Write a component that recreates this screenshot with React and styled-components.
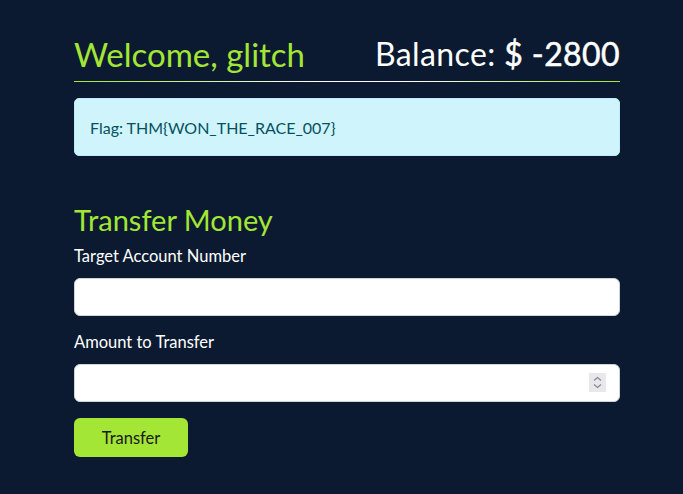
import React from "react"
import styled, { createGlobalStyle } from "styled-components"

const GlobalStyle = createGlobalStyle`
  html, body {
    margin: 0;
    padding: 0;
    background: #0b1a30;
  }
  body {
    font-family: Lato, "Open Sans", sans-serif;
    color: #ffffff;
  }
  * {
    box-sizing: border-box;
  }
`

const Page = styled.div`
  min-height: 494px;
  background: #0b1a30;
`

const Container = styled.div`
  width: 546px;
  margin-left: 74px;
  padding-top: 35px;
`

const Header = styled.div`
  display: flex;
  justify-content: space-between;
  align-items: flex-end;
  padding-bottom: 9px;
  position: relative;

  &::after {
    content: "";
    position: absolute;
    left: 0;
    right: 0;
    bottom: 0;
    height: 1px;
    background: linear-gradient(90deg, #a3e635 0%, #ffffff 45%, #ffffff 60%, #a3e635 100%);
  }
`

const Welcome = styled.h1`
  margin: 0;
  font-size: 33px;
  font-weight: 400;
  line-height: 38px;
  color: #a3e635;
`

const Balance = styled.h2`
  margin: 0;
  font-size: 32px;
  font-weight: 400;
  line-height: 38px;
  letter-spacing: 0.4px;
  color: #ffffff;

  strong {
    font-weight: 400;
    -webkit-text-stroke: 0.5px #ffffff;
  }
`

const Alert = styled.div`
  margin-top: 16px;
  padding: 0 15px;
  height: 58px;
  display: flex;
  align-items: center;
  background: #cff4fc;
  border: 1px solid #b6effb;
  border-radius: 5px;
  color: #055160;
  font-size: 16px;
`

const SectionTitle = styled.h2`
  margin: 47px 0 0;
  font-size: 29px;
  font-weight: 400;
  line-height: 34px;
  color: #a3e635;
`

const Field = styled.div`
  display: flex;
  flex-direction: column;
  margin-top: ${props => (props.first ? "7px" : "14px")};
`

const Label = styled.label`
  font-size: 16.5px;
  line-height: 24px;
  color: #ffffff;
  margin-bottom: 10px;
`

const InputWrap = styled.div`
  position: relative;
`

const Input = styled.input`
  width: 100%;
  height: 38px;
  border: 1px solid #ced4da;
  border-radius: 6px;
  background: #ffffff;
  padding: 6px 12px;
  font-size: 16px;
  outline: none;
`

const Spinner = styled.div`
  position: absolute;
  right: 14px;
  top: 9px;
  width: 17px;
  height: 19px;
  background: #e7e7ec;
  display: flex;
  align-items: center;
  justify-content: center;
`

const Button = styled.button`
  margin-top: 16px;
  width: 114px;
  height: 39px;
  border: none;
  border-radius: 6px;
  background: #a3e635;
  color: #1a1a1a;
  font-family: inherit;
  font-size: 16.5px;
  cursor: pointer;
`

const App = () => {
  return (
    <>
      <GlobalStyle />
      <Page>
        <Container>
          <Header>
            <Welcome>Welcome, glitch</Welcome>
            <Balance>
              Balance: <strong>$ -2800</strong>
            </Balance>
          </Header>
          <Alert>Flag: THM{"{"}WON_THE_RACE_007{"}"}</Alert>
          <SectionTitle>Transfer Money</SectionTitle>
          <Field first>
            <Label>Target Account Number</Label>
            <Input type="text" />
          </Field>
          <Field>
            <Label>Amount to Transfer</Label>
            <InputWrap>
              <Input type="text" />
              <Spinner>
                <svg width="9" height="13" viewBox="0 0 9 13" fill="none" stroke="#8a8a94" strokeWidth="1.3">
                  <path d="M1 4.5 L4.5 1.5 L8 4.5" />
                  <path d="M1 8.5 L4.5 11.5 L8 8.5" />
                </svg>
              </Spinner>
            </InputWrap>
          </Field>
          <Button>Transfer</Button>
        </Container>
      </Page>
    </>
  )
}

export default App
